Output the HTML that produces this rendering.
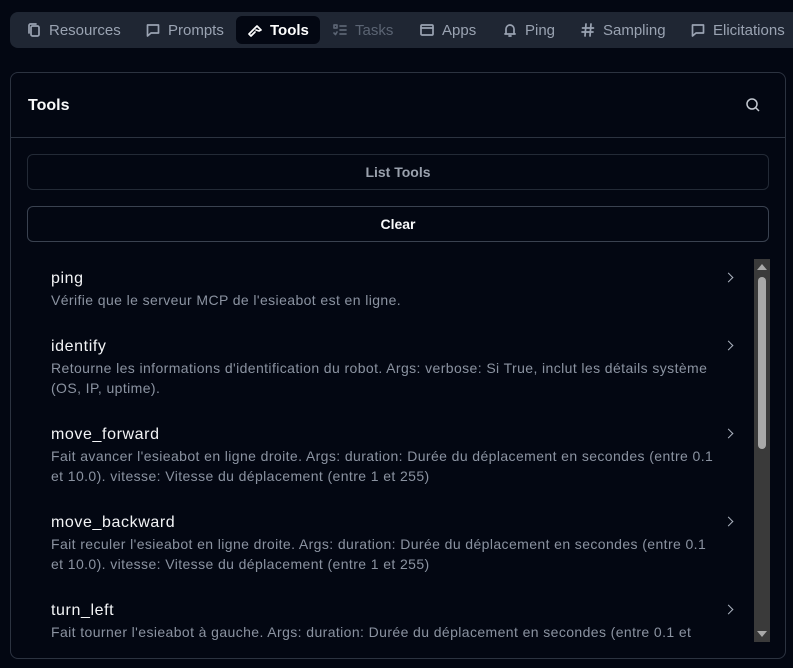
<!DOCTYPE html>
<html><head><meta charset="utf-8"><style>
*{box-sizing:border-box;margin:0;padding:0}
body{width:793px;height:668px;overflow:hidden;background:#030712;font-family:"Liberation Sans",sans-serif;color:#f9fafb;position:relative}
.nav{position:absolute;left:10px;top:12px;width:800px;height:36px;background:#1f2633;border-radius:8px}
.tab{position:absolute;top:4px;height:28px;display:flex;align-items:center;gap:7px;font-size:15px;color:#9aa3b2;padding:0 10px}
.tab svg{width:16px;height:16px;fill:none;stroke:currentColor;stroke-width:1.7;stroke-linecap:round;stroke-linejoin:round}
.tab.act{background:#030712;color:#fff;border-radius:6px}
.tab.dis{color:#5b6473}
.card{position:absolute;left:10px;top:72px;width:776px;height:587px;border:1px solid #2c3340;border-radius:8px}
.hdr{height:65px;border-bottom:1px solid #2c3340;position:relative}
.hdr h2{position:absolute;left:17px;top:24px;font-size:16px;font-weight:bold}
.btn{position:absolute;left:16px;width:742px;height:36px;border:1px solid #2c3340;border-radius:6px;text-align:center;line-height:34px;font-size:14px;font-weight:bold}
.item{position:absolute;left:40px;width:665px}
.item .n{font-size:16px;color:#f3f4f6;letter-spacing:0.6px}
.item .d{font-size:14px;color:#8b93a1;line-height:20px;margin-top:2px;letter-spacing:0.4px}
.chev{position:absolute;left:714px;border-right:1.6px solid #aab1bd;border-top:1.6px solid #aab1bd;transform:rotate(45deg);width:7px;height:7px}
.sb{position:absolute;left:743px;top:186px;width:16px;height:383px;background:#3a3a3a}
.thumb{position:absolute;left:4px;top:18px;width:8px;height:172px;background:#a8a8a8;border-radius:4px}
</style></head><body>
<div class="nav">
<div class="tab" style="left:6px"><svg viewBox="0 0 16 16"><rect x="5" y="4" width="8" height="10" rx="1.5"/><path d="M3 11V3.5A1.5 1.5 0 0 1 4.5 2H10"/></svg>Resources</div>
<div class="tab" style="left:125px"><svg viewBox="0 0 16 16"><path d="M2.5 3h11v8H6l-3.5 3z"/></svg>Prompts</div>
<div class="tab act" style="left:226px;padding:0 11px"><svg viewBox="0 0 16 16"><path d="M6 8 2 12l2 2 4-4M6 8l4-4 4 4-2 1-3-1"/></svg><b style="font-weight:600">Tools</b></div>
<div class="tab dis" style="left:312px"><svg viewBox="0 0 16 16"><path d="M2 3h3v3H2zM8 4h6M8 8h6M8 12h6M2 11l1.5 1.5L5 10"/></svg>Tasks</div>
<div class="tab" style="left:399px"><svg viewBox="0 0 16 16"><rect x="2" y="3" width="12" height="10" rx="1"/><path d="M2 6h12"/></svg>Apps</div>
<div class="tab" style="left:482px"><svg viewBox="0 0 16 16"><path d="M4 11V7a4 4 0 0 1 8 0v4l1 1H3zM7 14h2"/></svg>Ping</div>
<div class="tab" style="left:560px"><svg viewBox="0 0 16 16"><path d="M6 2 5 14M11 2l-1 12M2.5 6h11M2 10h11"/></svg>Sampling</div>
<div class="tab" style="left:670px"><svg viewBox="0 0 16 16"><path d="M2.5 3h11v8H6l-3.5 3z"/></svg>Elicitations</div>
</div>
<div class="card">
<div class="hdr"><h2>Tools</h2>
<svg style="position:absolute;left:734px;top:24px" width="16" height="16" viewBox="0 0 16 16" fill="none" stroke="#c4c9d1" stroke-width="1.5"><circle cx="7" cy="7" r="5"/><path d="m11 11 3 3"/></svg></div>
<div class="btn" style="top:81px;color:#9aa1ad;border-color:#232a36">List Tools</div>
<div class="btn" style="top:133px;border-color:#3a4250">Clear</div>
<div class="item" style="top:197px"><div class="n">ping</div><div class="d">Vérifie que le serveur MCP de l'esieabot est en ligne.</div></div>
<div class="chev" style="top:201px"></div>
<div class="item" style="top:265px"><div class="n">identify</div><div class="d">Retourne les informations d'identification du robot. Args: verbose: Si True, inclut les détails système<br>(OS, IP, uptime).</div></div>
<div class="chev" style="top:269px"></div>
<div class="item" style="top:353px"><div class="n">move_forward</div><div class="d">Fait avancer l'esieabot en ligne droite. Args: duration: Durée du déplacement en secondes (entre 0.1<br>et 10.0). vitesse: Vitesse du déplacement (entre 1 et 255)</div></div>
<div class="chev" style="top:357px"></div>
<div class="item" style="top:441px"><div class="n">move_backward</div><div class="d">Fait reculer l'esieabot en ligne droite. Args: duration: Durée du déplacement en secondes (entre 0.1<br>et 10.0). vitesse: Vitesse du déplacement (entre 1 et 255)</div></div>
<div class="chev" style="top:445px"></div>
<div class="item" style="top:529px"><div class="n">turn_left</div><div class="d">Fait tourner l'esieabot à gauche. Args: duration: Durée du déplacement en secondes (entre 0.1 et</div></div>
<div class="chev" style="top:533px"></div>
<div class="sb"><div class="thumb"></div>
<div style="position:absolute;left:3px;top:5px;border-left:5px solid transparent;border-right:5px solid transparent;border-bottom:6px solid #a8a8a8"></div>
<div style="position:absolute;left:3px;bottom:5px;border-left:5px solid transparent;border-right:5px solid transparent;border-top:6px solid #a8a8a8"></div></div>
</div>
</body></html>
